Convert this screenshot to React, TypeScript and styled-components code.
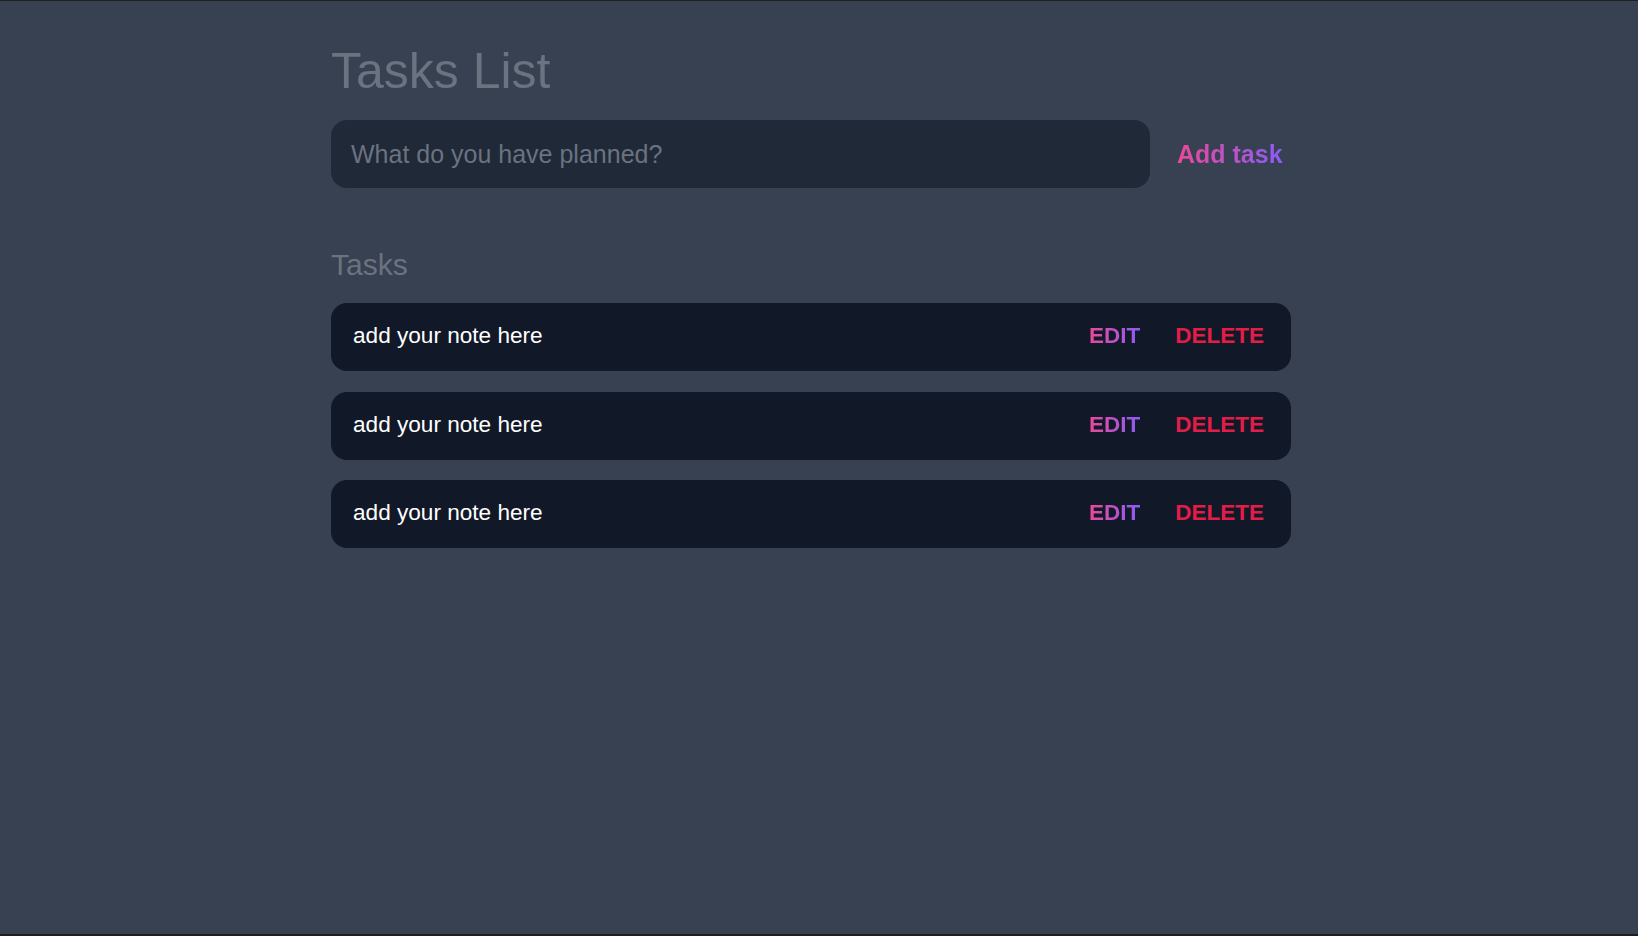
import React from "react";
import styled, { createGlobalStyle } from "styled-components";

const Global = createGlobalStyle`
  html, body { margin: 0; padding: 0; }
  body {
    background: #374151;
    font-family: "Liberation Sans", Arial, sans-serif;
  }
  * { box-sizing: border-box; }
`;

const Page = styled.div`
  min-height: 936px;
  background: #374151;
  border-top: 1px solid #1f1f1f;
  border-bottom: 2px solid #1f1f1f;
  display: flex;
  justify-content: center;
`;

const Container = styled.main`
  width: 976px;
  padding: 42px 16px 0 0;
  display: flex;
  flex-direction: column;
`;

const Title = styled.h1`
  margin: 0;
  font-size: 50px;
  font-weight: 400;
  line-height: 56px;
  color: #6b7280;
`;

const Form = styled.form`
  margin-top: 21px;
  display: flex;
  align-items: center;
  gap: 27px;
`;

const Input = styled.input`
  width: 819px;
  height: 68px;
  border: none;
  outline: none;
  border-radius: 16px;
  background: #1f2937;
  padding: 0 20px;
  font-family: inherit;
  font-size: 25px;
  color: #e5e7eb;
  &::placeholder { color: #6b7280; }
`;

const GradientText = styled.span`
  background: linear-gradient(90deg, #ec4899, #8b5cf6);
  -webkit-background-clip: text;
  background-clip: text;
  color: transparent;
`;

const AddButton = styled.button`
  background: none;
  border: none;
  padding: 0;
  font-family: inherit;
  font-size: 25px;
  font-weight: 700;
  cursor: pointer;
`;

const SectionTitle = styled.h2`
  margin: 60px 0 0;
  font-size: 30px;
  font-weight: 400;
  line-height: 34px;
  color: #6b7280;
`;

const List = styled.ul`
  list-style: none;
  margin: 21px 0 0;
  padding: 0;
  display: flex;
  flex-direction: column;
  gap: 20.6px;
`;

const Row = styled.li`
  height: 68px;
  border-radius: 16px;
  background: #111827;
  display: flex;
  align-items: center;
  padding: 0 27px 2px 22px;
`;

const Note = styled.span`
  flex: 1;
  font-size: 22.6px;
  color: #ffffff;
`;

const Actions = styled.div`
  display: flex;
  gap: 35px;
`;

const ActionButton = styled.button<{ $danger?: boolean }>`
  background: none;
  border: none;
  padding: 0;
  font-family: inherit;
  font-size: 22.5px;
  font-weight: 700;
  color: ${(p) => (p.$danger ? "#e11d48" : "inherit")};
  cursor: pointer;
`;

const tasks = ["add your note here", "add your note here", "add your note here"];

export default function App() {
  return (
    <>
      <Global />
      <Page>
        <Container>
          <Title>Tasks List</Title>
          <Form onSubmit={(e) => e.preventDefault()}>
            <Input placeholder="What do you have planned?" />
            <AddButton type="submit">
              <GradientText>Add task</GradientText>
            </AddButton>
          </Form>
          <SectionTitle>Tasks</SectionTitle>
          <List>
            {tasks.map((t, i) => (
              <Row key={i}>
                <Note>{t}</Note>
                <Actions>
                  <ActionButton>
                    <GradientText>EDIT</GradientText>
                  </ActionButton>
                  <ActionButton $danger>DELETE</ActionButton>
                </Actions>
              </Row>
            ))}
          </List>
        </Container>
      </Page>
    </>
  );
}
